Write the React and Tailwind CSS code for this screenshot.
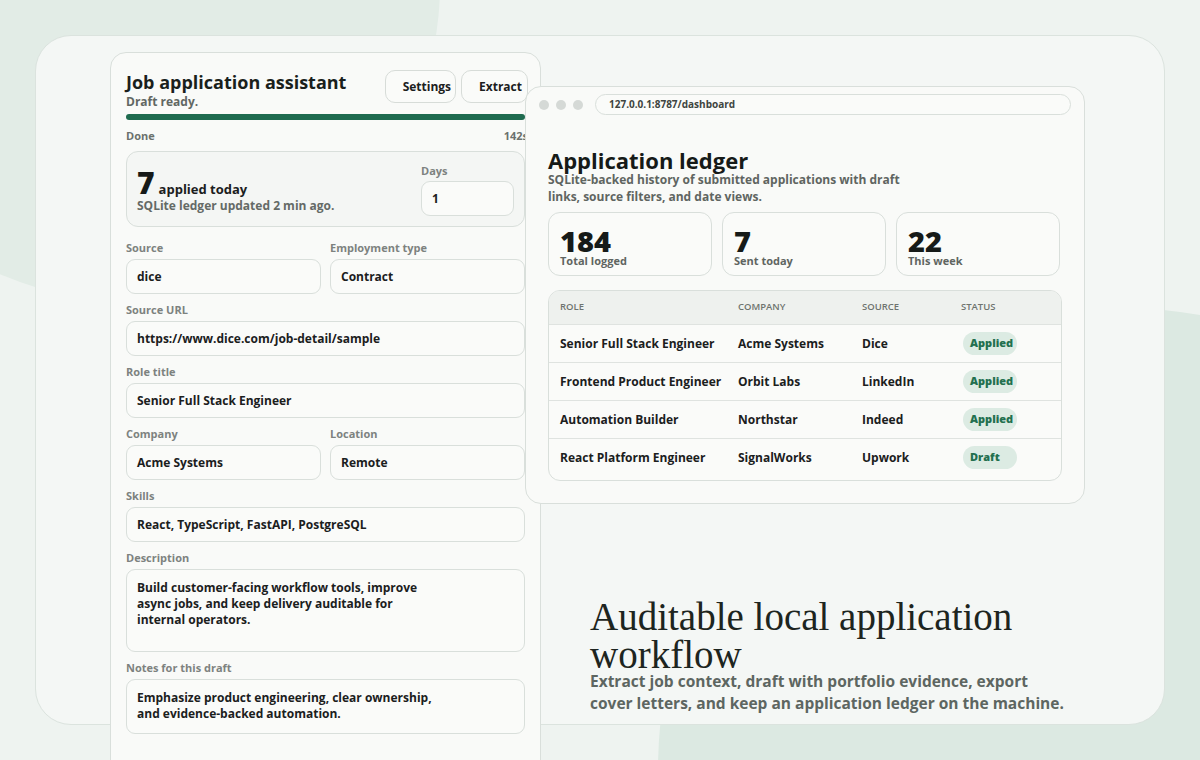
import React from 'react';

const ui = { fontFamily: '"Open Sans", Lato, sans-serif' };

const Field = ({ label, value, className = '', h = 'h-[35px]', multi = false }) => (
    <div className={`flex flex-col gap-[4px] ${className}`}>
        <div className="text-[11px] leading-[14px] font-bold text-[#7d827f]">{label}</div>
        {multi ? (
            <div className={`${h} rounded-[9px] border border-[#d9dfdb] bg-[#fafbf9] px-[10px] pt-[10px] text-[12px] leading-[16px] font-bold text-[#1b201d] whitespace-pre-line`}>
                {value}
            </div>
        ) : (
            <div className={`${h} rounded-[9px] border border-[#d9dfdb] bg-[#fafbf9] px-[10px] flex items-center text-[12px] font-bold text-[#1b201d]`}>
                {value}
            </div>
        )}
    </div>
);

const rows = [
    { role: 'Senior Full Stack Engineer', company: 'Acme Systems', source: 'Dice', status: 'Applied' },
    { role: 'Frontend Product Engineer', company: 'Orbit Labs', source: 'LinkedIn', status: 'Applied' },
    { role: 'Automation Builder', company: 'Northstar', source: 'Indeed', status: 'Applied' },
    { role: 'React Platform Engineer', company: 'SignalWorks', source: 'Upwork', status: 'Draft' },
];

const stats = [
    { value: '184', label: 'Total logged' },
    { value: '7', label: 'Sent today' },
    { value: '22', label: 'This week' },
];

export default function App() {
    return (
        <div className="relative w-[1200px] h-[760px] overflow-hidden bg-[#eef3f0] p-[35px]" style={ui}>
            {/* background blobs */}
            <div className="absolute left-[-190px] top-[-330px] w-[630px] h-[630px] rounded-full bg-[#e2ece6]" />
            <div className="absolute left-[658px] top-[308px] w-[924px] h-[924px] rounded-full bg-[#dce9e2]" />

            {/* main card */}
            <div className="relative h-[690px] rounded-[36px] border border-[#dbe3de] bg-[#f4f7f5] flex items-start pl-[74px] pt-[16px]">
                {/* Left: assistant panel */}
                <div className="w-[431px] shrink-0 rounded-[16px] border border-[#d9dfdb] bg-[#f9faf8] px-[15px] pt-[17px] pb-[60px]">
                    <div className="flex items-start justify-between">
                        <div className="pt-[1px]">
                            <div className="text-[18px] leading-[22px] font-bold text-[#1a1f1c]">Job application assistant</div>
                            <div className="text-[12px] leading-[16px] font-bold text-[#616763] mt-[1px]">Draft ready.</div>
                        </div>
                        <div className="flex gap-[5px] -mr-[3px]">
                            <div className="h-[33px] pl-[17px] pr-[4px] rounded-[10px] border border-[#d7dcd8] bg-[#fafbf9] flex items-center text-[12px] font-bold text-[#1b201d]">Settings</div>
                            <div className="h-[33px] pl-[17px] pr-[5px] rounded-[10px] border border-[#d7dcd8] bg-[#fafbf9] flex items-center text-[12px] font-bold text-[#1b201d]">Extract</div>
                        </div>
                    </div>

                    <div className="mt-[4px] h-[6px] rounded-full bg-[#1f6b4f]" />

                    <div className="mt-[9px] flex justify-between text-[11px] leading-[14px] font-bold text-[#6b716d]">
                        <span>Done</span>
                        <span className="-mr-[3px]">142s</span>
                    </div>

                    <div className="mt-[8px] h-[76px] rounded-[12px] border border-[#d9dfdb] bg-[#f4f6f4] px-[10px] flex items-center justify-between">
                        <div className="pt-[6px]">
                            <div className="flex items-baseline gap-[4px]">
                                <span className="text-[30px] leading-[26px] font-extrabold text-[#161a18]">7</span>
                                <span className="text-[13px] font-bold text-[#1b201d]">applied today</span>
                            </div>
                            <div className="text-[12px] leading-[16px] font-bold text-[#646a66] mt-[-1px]">SQLite ledger updated 2 min ago.</div>
                        </div>
                        <div className="w-[93px] flex flex-col gap-[3px] pt-[2px]">
                            <div className="text-[11px] leading-[14px] font-bold text-[#7d827f]">Days</div>
                            <div className="h-[35px] rounded-[9px] border border-[#d9dfdb] bg-[#fafbf9] px-[10px] flex items-center text-[12px] font-bold text-[#1b201d]">1</div>
                        </div>
                    </div>

                    <div className="mt-[14px] flex flex-col gap-[9px]">
                        <div className="grid grid-cols-2 gap-x-[9px]">
                            <Field label="Source" value="dice" />
                            <Field label="Employment type" value="Contract" />
                        </div>
                        <Field label="Source URL" value="https://www.dice.com/job-detail/sample" />
                        <Field label="Role title" value="Senior Full Stack Engineer" />
                        <div className="grid grid-cols-2 gap-x-[9px]">
                            <Field label="Company" value="Acme Systems" />
                            <Field label="Location" value="Remote" />
                        </div>
                        <Field label="Skills" value="React, TypeScript, FastAPI, PostgreSQL" />
                        <Field
                            label="Description"
                            multi
                            h="h-[83px]"
                            value={'Build customer-facing workflow tools, improve\nasync jobs, and keep delivery auditable for\ninternal operators.'}
                        />
                        <Field
                            label="Notes for this draft"
                            multi
                            h="h-[55px]"
                            value={'Emphasize product engineering, clear ownership,\nand evidence-backed automation.'}
                        />
                    </div>
                </div>

                {/* Right column */}
                <div className="relative z-10 w-[560px] shrink-0 -ml-[16px] mt-[34px]">
                    {/* Browser window */}
                    <div className="rounded-[16px] border border-[#d9dfdb] bg-[#f9faf8] pb-[22px]">
                        <div className="flex items-center pt-[7px] pl-[13px] pr-[13px]">
                            <div className="flex gap-[7px]">
                                <span className="w-[10px] h-[10px] rounded-full bg-[#d5d9d6]" />
                                <span className="w-[10px] h-[10px] rounded-full bg-[#d5d9d6]" />
                                <span className="w-[10px] h-[10px] rounded-full bg-[#d5d9d6]" />
                            </div>
                            <div className="ml-[12px] flex-1 h-[21px] rounded-full border border-[#d9dfdb] bg-[#fafbf9] flex items-center pl-[13px] text-[10px] font-bold text-[#3e4440]">
                                127.0.0.1:8787/dashboard
                            </div>
                        </div>

                        <div className="px-[22px] mt-[35px]">
                            <div className="text-[22px] leading-[20px] font-bold text-[#161a18]">Application ledger</div>
                            <div className="mt-[1px] w-[372px] text-[12px] leading-[17px] font-bold text-[#5f6561]">
                                SQLite-backed history of submitted applications with draft links, source filters, and date views.
                            </div>

                            <div className="mt-[7px] grid grid-cols-3 gap-[10px] pr-[2px]">
                                {stats.map((s) => (
                                    <div key={s.label} className="h-[64px] rounded-[12px] border border-[#d9dfdb] bg-[#fafbf9] px-[11px] pb-[8px] flex flex-col justify-end">
                                        <div className="text-[29px] leading-[26px] font-extrabold text-[#161a18]">{s.value}</div>
                                        <div className="text-[11px] leading-[13px] font-bold text-[#5f6561]">{s.label}</div>
                                    </div>
                                ))}
                            </div>

                            <div className="mt-[14px] rounded-[12px] border border-[#d9dfdb] bg-[#fafbf9] overflow-hidden pb-[4px]">
                                <div className="h-[33px] bg-[#eef1ee] flex items-center text-[9.5px] font-semibold uppercase text-[#6e746f]">
                                    <div className="w-[189px] pl-[11px]">Role</div>
                                    <div className="w-[124px]">Company</div>
                                    <div className="w-[99px]">Source</div>
                                    <div>Status</div>
                                </div>
                                {rows.map((r) => (
                                    <div key={r.role} className="h-[38px] border-t border-[#dfe3e0] flex items-center text-[12px] font-bold text-[#1b201d]">
                                        <div className="w-[189px] pl-[11px]">{r.role}</div>
                                        <div className="w-[124px]">{r.company}</div>
                                        <div className="w-[99px]">{r.source}</div>
                                        <div className="pl-[2px]">
                                            <span className="w-[54px] h-[23px] rounded-full bg-[#dcebe3] flex items-center pl-[7px] text-[11px] font-extrabold text-[#23704f]">
                                                {r.status}
                                            </span>
                                        </div>
                                    </div>
                                ))}
                            </div>
                        </div>
                    </div>

                    {/* Hero copy */}
                    <div className="ml-[65px] mt-[94px]">
                        <div className="text-[39px] leading-[38px] text-[#1d2520]" style={{ fontFamily: '"Liberation Serif", "DejaVu Serif", serif' }}>
                            Auditable local application
                            <br />
                            workflow
                        </div>
                        <div className="mt-[-4px] text-[15.5px] leading-[22px] font-bold text-[#5d6661]">
                            Extract job context, draft with portfolio evidence, export
                            <br />
                            cover letters, and keep an application ledger on the machine.
                        </div>
                    </div>
                </div>
            </div>
        </div>
    );
}
